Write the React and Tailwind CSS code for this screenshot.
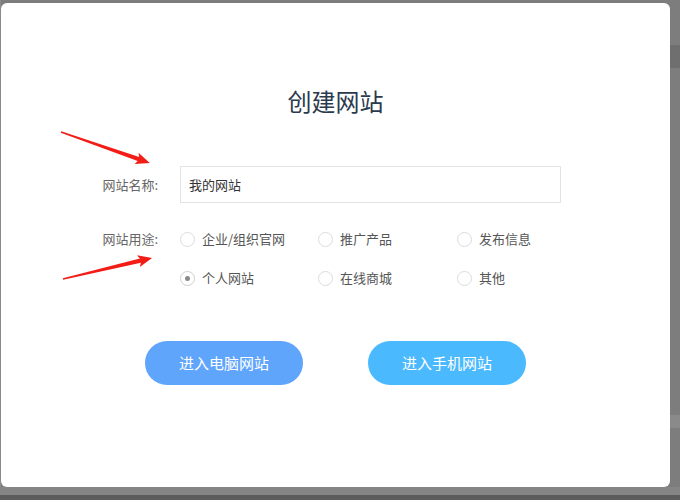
import React from 'react';

const purposes = [
  { label: '企业/组织官网' },
  { label: '推广产品' },
  { label: '发布信息' },
  { label: '个人网站', checked: true },
  { label: '在线商城' },
  { label: '其他' },
];

function Radio({ label, checked }) {
  return (
    <label className="flex items-center gap-[7px] h-[20px] text-[13px] text-[#555]">
      <span className={`w-[15px] h-[15px] rounded-full border bg-white flex items-center justify-center ${checked ? 'border-[#cfcfcf]' : 'border-[#dcdcdc]'}`}>
        {checked && <span className="w-[5px] h-[5px] rounded-full bg-[#8a8a8a]" />}
      </span>
      {label}
    </label>
  );
}

function Arrow({ x, y, angle, length }) {
  const l = length;
  return (
    <g transform={`translate(${x},${y}) rotate(${angle})`} fill="#f21d16">
      <polygon points={`0,-0.7 ${l - 12},-2.2 ${l - 14},-6 ${l},0 ${l - 14},6 ${l - 12},2.2 0,0.7`} />
    </g>
  );
}

export default function App() {
  return (
    <div className="relative w-[680px] h-[500px] bg-[#7d7d7d] overflow-hidden" style={{ fontFamily: '"Noto Sans CJK SC", "Noto Sans", sans-serif' }}>
      <div className="flex h-[487px]">
        <div className="w-[1px] bg-[#8a8a8a]" />
        <div className="mt-[3px] w-[669px] h-[484px] bg-white rounded-[6px] flex flex-col items-center">
          <h1 className="mt-[82px] text-[24px] leading-[32px] text-[#2b3a4c] font-normal">创建网站</h1>

          <div className="mt-[49px] w-full flex flex-col">
            <div className="flex items-center">
              <span className="w-[157px] text-right text-[13px] text-[#666]">网站名称:</span>
              <input
                className="ml-[22px] w-[381px] h-[37px] border border-[#e3e3e3] px-[8px] text-[13px] text-[#333] outline-none"
                defaultValue="我的网站"
              />
            </div>

            <div className="mt-[26px] flex items-start">
              <span className="w-[157px] h-[20px] leading-[20px] text-right text-[13px] text-[#666]">网站用途:</span>
              <div className="ml-[22px] grid grid-cols-[138px_139px_120px] gap-y-[19px]">
                {purposes.map(p => (
                  <Radio key={p.label} label={p.label} checked={p.checked} />
                ))}
              </div>
            </div>
          </div>

          <div className="mt-[53px] flex gap-[65px]">
            <button className="w-[158px] h-[44px] rounded-full bg-[#5fa5fc] text-white text-[15px]">进入电脑网站</button>
            <button className="w-[158px] h-[44px] rounded-full bg-[#4bb9fd] text-white text-[15px]">进入手机网站</button>
          </div>
        </div>
        <div className="flex-1 flex flex-col">
          <div className="h-[45px]" />
          <div className="h-[23px] bg-[#6f6f6f]" />
          <div className="h-[347px]" />
          <div className="h-[13px] bg-[#8a8a8a]" />
        </div>
      </div>
      <div className="h-[8px] bg-[#858585]" />
      <div className="h-[5px] bg-[#5c5c5c]" />

      <svg className="absolute inset-0 pointer-events-none" width="680" height="500">
        <Arrow x={61} y={132} angle={19.2} length={94} />
        <Arrow x={63} y={279} angle={-13.3} length={91.5} />
      </svg>
    </div>
  );
}
